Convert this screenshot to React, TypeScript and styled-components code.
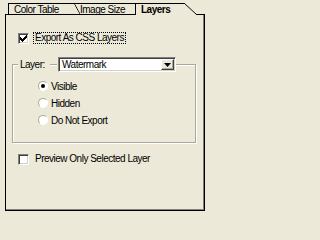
import styled, { createGlobalStyle } from 'styled-components'

const GlobalStyle = createGlobalStyle`
  html, body {
    margin: 0;
    padding: 0;
    background: #ece9d8;
  }
`

const Palette = styled.div`
  width: 208px;
  height: 219px;
  box-sizing: border-box;
  padding: 3px 3px 8px 5px;
  display: flex;
  flex-direction: column;
  background: #ece9d8;
  font-family: 'Liberation Sans', Arial, sans-serif;
  font-size: 10px;
  letter-spacing: -0.5px;
  color: #000;
  user-select: none;
`

const TabStrip = styled.div`
  height: 11px;
  display: flex;
  align-items: flex-start;
  padding-left: 3px;
  position: relative;
  z-index: 1;
`

const Tab = styled.div<{ $overlap: number; $layer: number; $active: boolean }>`
  display: flex;
  height: ${(p) => (p.$active ? 12 : 11)}px;
  margin-left: ${(p) => -p.$overlap}px;
  position: relative;
  z-index: ${(p) => p.$layer};
`

const TabFace = styled.div<{ $width: number; $edge: boolean; $active: boolean }>`
  width: ${(p) => p.$width}px;
  box-sizing: border-box;
  border-top: 1px solid #000;
  border-left: ${(p) => (p.$edge ? '1px solid #000' : 'none')};
  padding-left: ${(p) => (p.$edge ? 5 : 6)}px;
  background: #ece9d8;
  line-height: 11px;
  font-weight: ${(p) => (p.$active ? 700 : 400)};
  white-space: nowrap;
  overflow: hidden;
`

const TabSlant = styled.div<{ $width: number }>`
  width: ${(p) => p.$width}px;
  align-self: stretch;
  background: linear-gradient(
    to top right,
    #ece9d8 calc(50% - 0.7px),
    #000 50%,
    transparent calc(50% + 0.7px)
  );
`

const Panel = styled.div`
  flex: 1;
  display: flex;
  flex-direction: column;
  align-items: flex-start;
  border: 1px solid #000;
  box-shadow: inset -1px -1px 0 #808080;
  padding: 17px 8px 0 6px;
`

const CheckRow = styled.label<{ $gapTop: number }>`
  display: flex;
  align-items: center;
  gap: 4px;
  height: 12px;
  margin: ${(p) => p.$gapTop}px 0 0 6px;
`

const CheckBox = styled.span`
  width: 11px;
  height: 11px;
  box-sizing: border-box;
  display: flex;
  align-items: center;
  justify-content: center;
  background: #fff;
  border: 1px solid;
  border-color: #808080 #fff #fff #808080;
  box-shadow: inset 1px 1px 0 #404040, inset -1px -1px 0 #d4d0c8;
`

const Label = styled.span<{ $focused?: boolean }>`
  border: 1px dotted ${(p) => (p.$focused ? '#000' : 'transparent')};
  padding: 0 1px;
  line-height: 10px;
  white-space: nowrap;
`

const Group = styled.fieldset`
  align-self: stretch;
  margin: 13px 0 0;
  padding: 0;
  min-width: 0;
  border: 1px solid #aca899;
  box-shadow: inset 1px 1px 0 #fff, 1px 1px 0 #fff;
`

const Legend = styled.legend`
  display: flex;
  align-items: center;
  margin-left: 5px;
  padding: 0 0 0 2px;
  background: #ece9d8;
`

const LegendText = styled.span`
  width: 28px;
  line-height: 10px;
`

const LegendRule = styled.span`
  width: 7px;
  height: 1px;
  margin: 0 1px 0 2px;
  border-top: 1px solid #aca899;
  background: #fff;
`

const Select = styled.div`
  width: 118px;
  height: 15px;
  box-sizing: border-box;
  display: flex;
  align-items: center;
  padding: 0 1px 0 3px;
  background: #fff;
  border: 1px solid;
  border-color: #808080 #fff #fff #808080;
  box-shadow: inset 1px 1px 0 #404040, inset -1px -1px 0 #d4d0c8;
`

const SelectValue = styled.span`
  flex: 1;
  line-height: 10px;
`

const ArrowButton = styled.span`
  width: 13px;
  height: 11px;
  box-sizing: border-box;
  display: flex;
  align-items: center;
  justify-content: center;
  background: #ece9d8;
  border: 1px solid;
  border-color: #fff #404040 #404040 #fff;
  box-shadow: inset -1px -1px 0 #aca899;
`

const RadioList = styled.div`
  display: flex;
  flex-direction: column;
  gap: 7px;
  padding: 9px 0 17px 25px;
`

const RadioRow = styled.label`
  display: flex;
  align-items: center;
  gap: 3px;
  height: 10px;
`

const RadioDot = styled.span<{ $checked: boolean }>`
  width: 10px;
  height: 10px;
  box-sizing: border-box;
  border-radius: 50%;
  display: flex;
  align-items: center;
  justify-content: center;
  background: #fff;
  border: 1px solid;
  border-color: #aca899 #fff #fff #aca899;

  &::after {
    content: '';
    width: 4px;
    height: 4px;
    border-radius: 50%;
    background: ${(p) => (p.$checked ? '#000' : 'transparent')};
  }
`

const tabs = [
  { label: 'Color Table', face: 66, slant: 6, layer: 3 },
  { label: 'Image Size', face: 61, slant: 6, layer: 2 },
  { label: 'Layers', face: 49, slant: 13, layer: 4, active: true },
]

const visibility = ['Visible', 'Hidden', 'Do Not Export']

export default function App() {
  return (
    <>
      <GlobalStyle />
      <Palette>
        <TabStrip>
          {tabs.map((t, i) => (
            <Tab
              key={t.label}
              $overlap={i === 0 ? 0 : tabs[i - 1].slant}
              $layer={t.layer}
              $active={!!t.active}
            >
              <TabFace $width={t.face} $edge={i !== 1} $active={!!t.active}>
                {t.label}
              </TabFace>
              <TabSlant $width={t.slant} />
            </Tab>
          ))}
        </TabStrip>

        <Panel>
          <CheckRow $gapTop={0}>
            <CheckBox>
              <svg width="7" height="7" viewBox="0 0 7 7">
                <path d="M0 2h1v1h1v1h1V3h1V2h1V1h1V0h1v3H6v1H5v1H4v1H3v1H2V6H1V5H0z" fill="#000" />
              </svg>
            </CheckBox>
            <Label $focused>Export As CSS Layers</Label>
          </CheckRow>

          <Group>
            <Legend>
              <LegendText>Layer:</LegendText>
              <LegendRule />
              <Select>
                <SelectValue>Watermark</SelectValue>
                <ArrowButton>
                  <svg width="7" height="4" viewBox="0 0 7 4">
                    <path d="M0 0h7L3.5 4z" fill="#000" />
                  </svg>
                </ArrowButton>
              </Select>
            </Legend>
            <RadioList>
              {visibility.map((v, i) => (
                <RadioRow key={v}>
                  <RadioDot $checked={i === 0} />
                  <span>{v}</span>
                </RadioRow>
              ))}
            </RadioList>
          </Group>

          <CheckRow $gapTop={10}>
            <CheckBox />
            <Label>Preview Only Selected Layer</Label>
          </CheckRow>
        </Panel>
      </Palette>
    </>
  )
}
